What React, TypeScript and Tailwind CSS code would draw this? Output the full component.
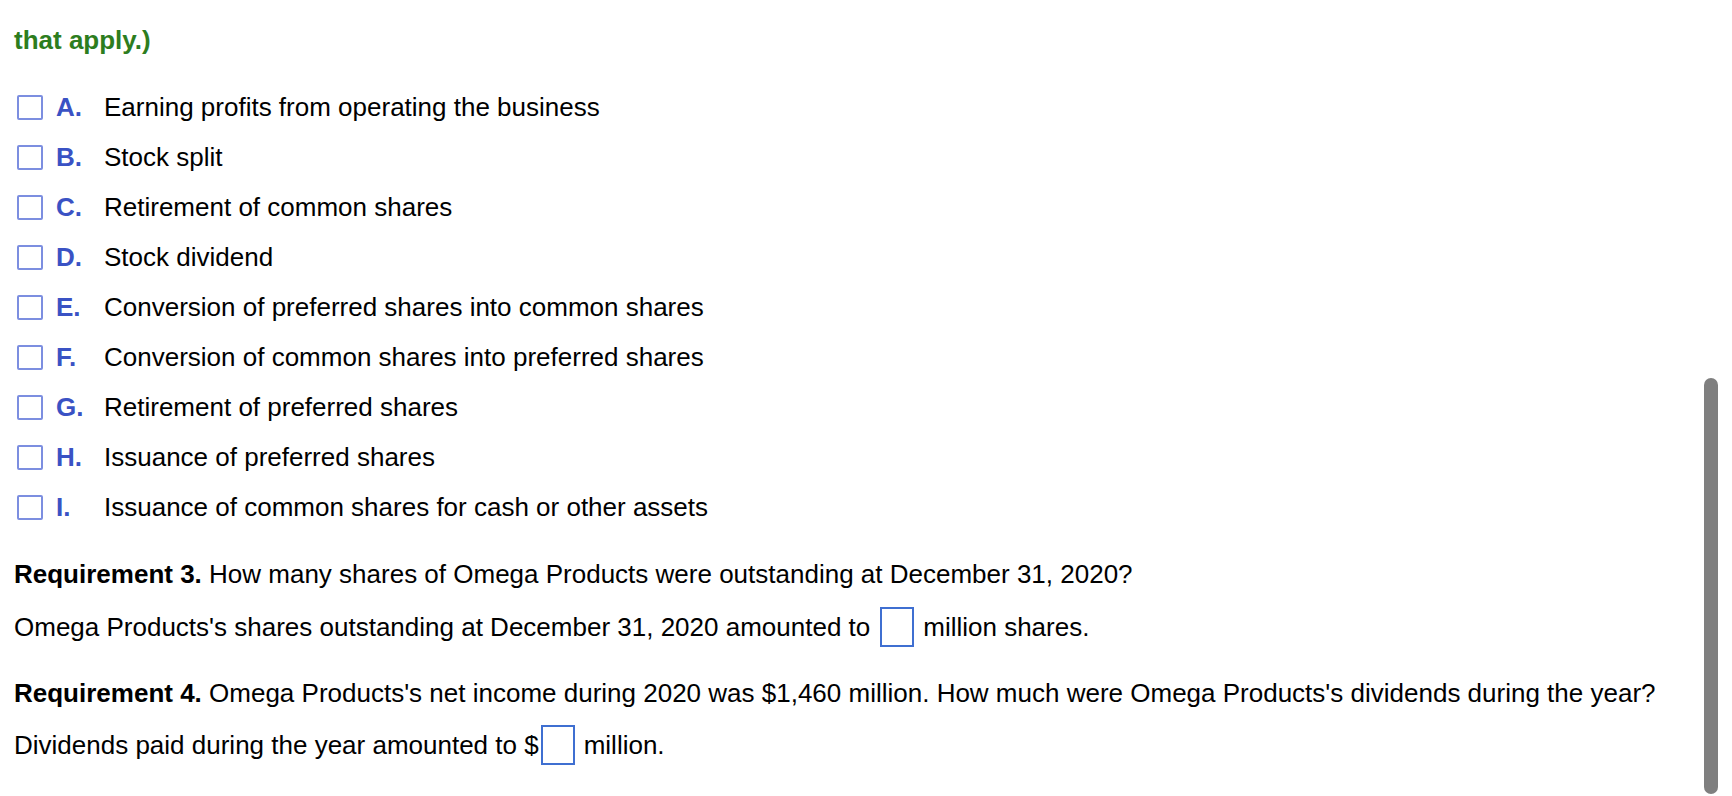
import React from "react";

const options: [string, string][] = [
  ["A.", "Earning profits from operating the business"],
  ["B.", "Stock split"],
  ["C.", "Retirement of common shares"],
  ["D.", "Stock dividend"],
  ["E.", "Conversion of preferred shares into common shares"],
  ["F.", "Conversion of common shares into preferred shares"],
  ["G.", "Retirement of preferred shares"],
  ["H.", "Issuance of preferred shares"],
  ["I.", "Issuance of common shares for cash or other assets"],
];

function AnswerBox() {
  return <span className="inline-block w-[34px] h-[40px] border-2 border-[#3f6fd1] bg-white" />;
}

export default function App() {
  return (
    <div
      className="relative h-[796px] w-full overflow-hidden bg-white text-black text-[26px]"
      style={{ fontFamily: '"Liberation Sans", Arial, Helvetica, sans-serif' }}
    >
      <div className="pl-[14px] pt-[25px]">
        {/* header tail */}
        <div className="h-[30px] leading-[30px] font-bold text-[#2d7d1e]">that apply.)</div>

        {/* options */}
        <div className="mt-[27px] flex flex-col">
          {options.map(([letter, label]) => (
            <div key={letter} className="h-[50px] flex items-center">
              <span className="ml-[3px] w-[26px] h-[25px] border-2 border-[#7c8ee0] rounded-[2px]" />
              <span className="ml-[13px] w-[48px] font-bold text-[#3a52c4]">{letter}</span>
              <span>{label}</span>
            </div>
          ))}
        </div>

        {/* requirement 3 */}
        <div className="mt-[27px] h-[30px] leading-[30px]">
          <span className="font-bold">Requirement 3.</span> How many shares of Omega Products were outstanding at December 31, 2020?
        </div>
        <div className="mt-[18px] h-[40px] flex items-center">
          <span>Omega Products's shares outstanding at December 31, 2020 amounted to</span>
          <span className="ml-[10px] mr-[9px] flex"><AnswerBox /></span>
          <span>million shares.</span>
        </div>

        {/* requirement 4 */}
        <div className="mt-[31px] h-[30px] leading-[30px]">
          <span className="font-bold">Requirement 4.</span> Omega Products's net income during 2020 was $1,460 million. How much were Omega Products's dividends during the year?
        </div>
        <div className="mt-[17px] h-[40px] flex items-center">
          <span>Dividends paid during the year amounted to $</span>
          <span className="ml-[2px] mr-[9px] flex"><AnswerBox /></span>
          <span>million.</span>
        </div>
      </div>

      {/* scrollbar thumb */}
      <div className="absolute left-[1704px] top-[378px] w-[14px] h-[416px] rounded-full bg-[#7f7f7f]" />
    </div>
  );
}
